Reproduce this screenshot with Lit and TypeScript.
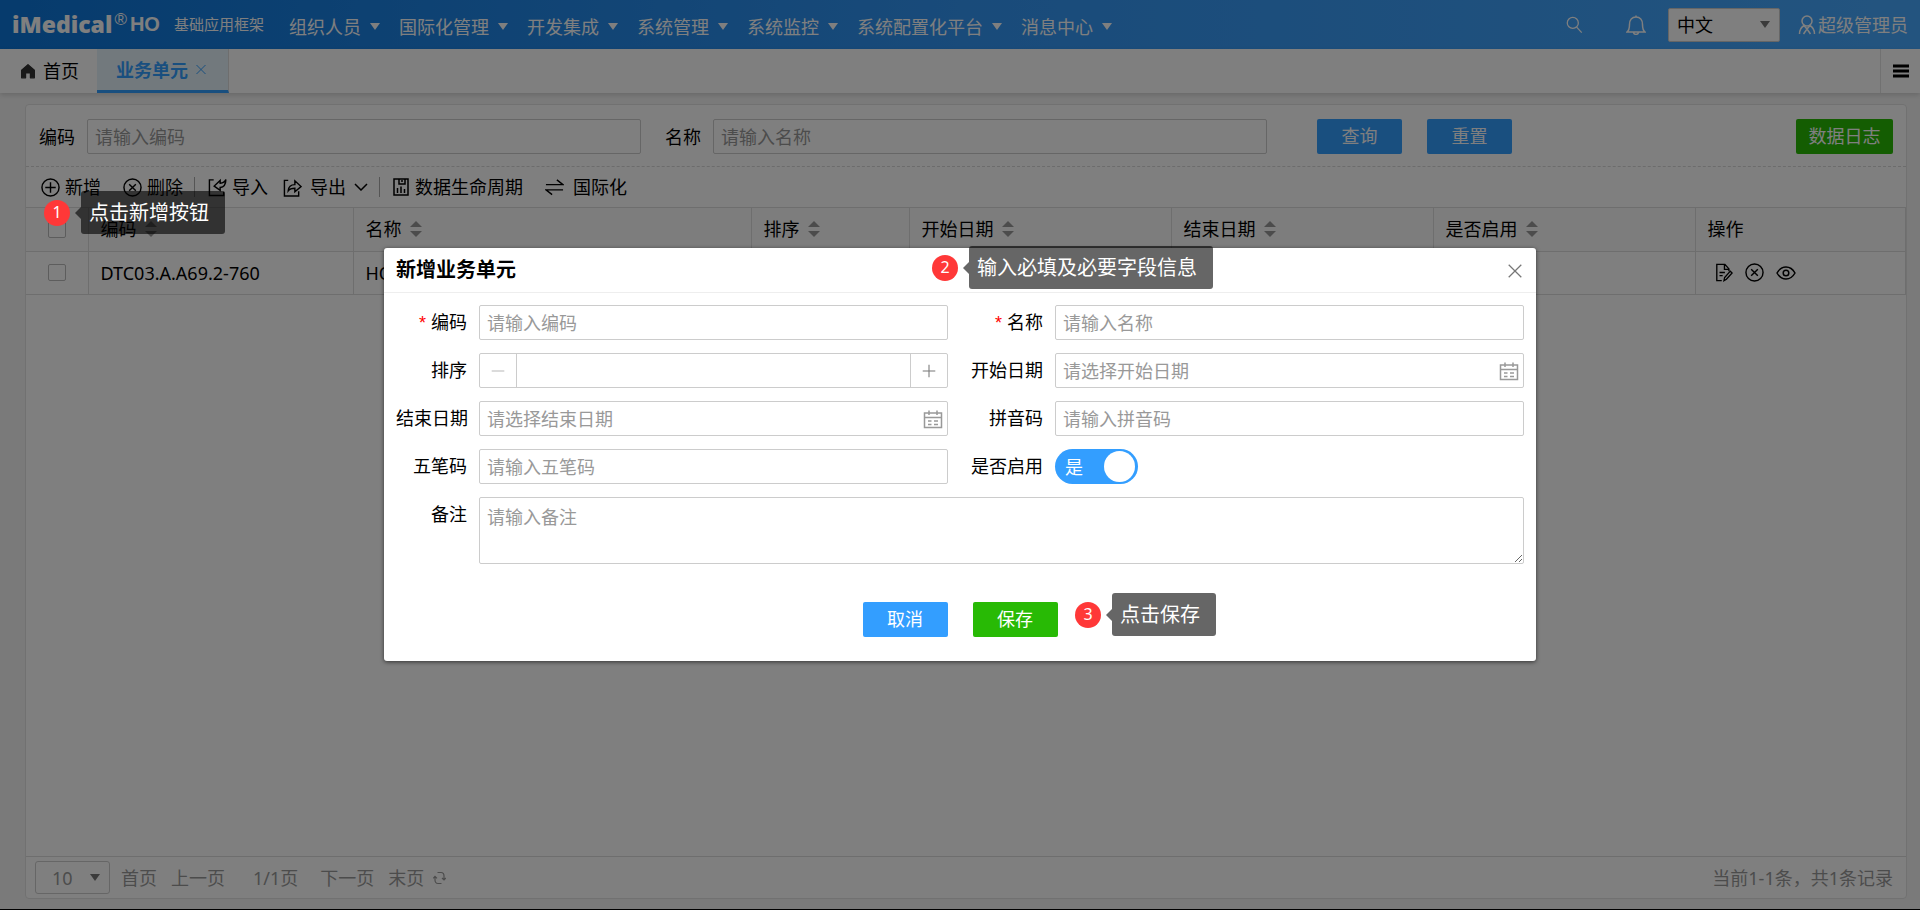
import { LitElement, html, css, svg, nothing } from "lit";
import { customElement, state } from "lit/decorators.js";

const icon = (w: number, h: number, body: unknown, box = "0 0 20 20") =>
  html`<svg class="icon" width=${w} height=${h} viewBox=${box} aria-hidden="true">${body}</svg>`;

const icons = {
  home: icon(16, 16, svg`<path d="M10 2 2 9v9.500h5v-6h6v6h5V9z" fill="#333" stroke="#333" stroke-linejoin="round" stroke-width="1.500"/>`),
  close: icon(10, 11, svg`<path d="M1 1 19 19M19 1 1 19" stroke-width="2"/>`),
  closeBig: icon(14, 14, svg`<path d="M1 1 19 19M19 1 1 19" stroke-width="1.800"/>`),
  add: icon(19, 19, svg`<circle cx="10" cy="10" r="9"/><path d="M10 4.500v11M4.500 10h11"/>`),
  remove: icon(19, 19, svg`<circle cx="10" cy="10" r="9"/><path d="m6.500 6.500 7 7M13.500 6.500l-7 7"/>`),
  importIcon: icon(19, 19, svg`<path d="M6 2H1.500v16.500h15V14.500"/><path d="M18.800 1.500c-1 2.500-3 3.700-6 4V2.500L6.500 8.500l6.300 4.500V10c4-.5 6-3.500 6-8.500z"/>`),
  exportIcon: icon(19, 19, svg`<path d="M5.500 2.500H1.500v16.500h15V14"/><path d="M5.500 13.500c.3-4.500 2.500-6.500 7-6.500V3l6.500 6-6.500 5.500v-3.700c-3 0-5.500.7-7 2.700z"/>`),
  down: icon(14, 8, svg`<path d="m1 1 6 6 6-6"/>`, "0 0 14 8"),
  cycle: icon(16, 18, svg`<path d="M1 1h14v16H1zM6 1v5h6V1M9 2v2M4.500 15v-5M8 15V8.500M11.500 15v-4"/>`, "0 0 16 18"),
  swap: icon(19, 19, svg`<path d="M1 7h18L12.500 2M19 12.500H1l6.500 5"/>`),
  search: icon(17, 18, svg`<circle cx="8" cy="7.500" r="6.500"/><path d="m12.500 12.500 6 6.500"/>`),
  bell: icon(20, 20, svg`<path d="M1 17h18c-2-1.500-2.500-3-2.500-7.500C16.500 5 14 2 10 2S3.500 5 3.500 9.500C3.500 14 3 15.500 1 17zM10 2V.5M7.500 17.500c.5 2.500 4.500 2.500 5 0"/>`),
  user: icon(18, 20, svg`<circle cx="9" cy="6" r="5"/><path d="M1.500 19c0-4.500 2-7 4.500-8.500l3 3.500 3-3.500c2.500 1.500 4.500 4 4.500 8.500M5.500 19 9 14l3.500 5"/>`, "0 0 18 20"),
  menu: icon(16, 14, svg`<path d="M0 2h16M0 7h16M0 12h16" stroke-width="3"/>`, "0 0 16 14"),
  edit: icon(18, 19, svg`<path d="M7.500 19H2V1h9l4.500 5v2.500M10.500 1v5.500h5M5 10h6M5 13.500h3.500"/><path d="m10 19 .7-3.500L17 8.500l2 2-6.300 7z"/>`),
  view: icon(20, 16, svg`<path d="M1 8c4.500-8 13.500-8 18 0-4.500 8-13.500 8-18 0z"/><circle cx="10" cy="8" r="2.800"/>`, "0 0 20 16"),
  calendar: icon(20, 20, svg`<path d="M1.500 4h17v14.500h-17zM1.500 8.500h17M6 1.500V6M14 1.500V6M5 12h3.500M11 12h4M5 15.500h3.500M11 15.500h4"/>`),
  minus: icon(14, 14, svg`<path d="M1 10h18"/>`),
  plus: icon(14, 14, svg`<path d="M1 10h18M10 1v18"/>`),
  refresh: icon(13, 14, svg`<path d="M4.500 1.500H8c2 0 3 1.500 3 3.500v3.500M9 7l2 2 1.800-2M8.500 12.500H5c-2 0-3-1.500-3-3.500V5.500M.2 7.300 2 5.300l2 2" stroke-width="1.200"/>`, "0 0 13 14"),
};

const MENUS = ["组织人员", "国际化管理", "开发集成", "系统管理", "系统监控", "系统配置化平台", "消息中心"];
const COLUMNS = ["编码", "名称", "排序", "开始日期", "结束日期", "是否启用"];

@customElement("app-root")
export class AppRoot extends LitElement {
  @state() private enabled = true;

  static styles = css`
    :host {
      display: block;
      height: 100vh;
      min-height: 700px;
      position: relative;
      overflow: hidden;
      box-sizing: border-box;
      border-bottom: 1px solid #000;
      font: 18px/24px "Noto Sans", "Noto Sans CJK SC", sans-serif;
      color: #000;
    }
    * { box-sizing: border-box; }
    button, input, select, textarea { font: inherit; color: inherit; margin: 0; }
    button { border: 0; background: none; padding: 0; cursor: pointer; white-space: nowrap; }
    a { color: inherit; text-decoration: none; white-space: nowrap; }
    .icon { fill: none; stroke: currentColor; stroke-width: 1.5; flex: none; display: block; }
    .page { height: 100%; display: flex; flex-direction: column; background: #f5f5f5; }

    .top {
      height: 49px; flex: none; display: flex; align-items: center; color: #fff;
      padding: 0 12px; background: linear-gradient(90deg, #0c76da, #3296f5 50%, #47a9ff);
    }
    .brand { display: flex; align-items: center; padding-bottom: 2px; }
    .brand-name { font: 800 23px/28px "Open Sans", sans-serif; }
    .brand-reg { font: 17px/20px "Liberation Sans", sans-serif; align-self: flex-start; margin-left: 2px; }
    .brand-ho { font: 700 20px/28px "Liberation Sans", sans-serif; margin-left: 3px; }
    .brand-sub { font-size: 15px; margin-left: 14px; }
    .nav { display: flex; gap: 19px; margin-left: 25px; padding-top: 4px; flex: 1; }
    .nav-item { display: flex; align-items: center; gap: 9px; }
    .caret { border: 5px solid transparent; border-top: 7px solid currentColor; border-bottom: 0; }
    .tools { display: flex; align-items: center; }
    .tool { margin-right: 43px; }
    .bell { margin-right: 22px; }
    .lang-box { display: grid; align-items: center; margin-right: 18px; color: #000; }
    .lang-box > *, .size-box > * { grid-area: 1 / 1; }
    .lang-box .caret, .size-box .caret { justify-self: end; margin-right: 10px; pointer-events: none; color: #777; }
    .lang { appearance: none; width: 112px; height: 34px; background: #fff; border: 1px solid #ccc; border-radius: 2px; padding: 0 8px; }
    .user { display: flex; align-items: center; gap: 2px; }

    .tabs { height: 44px; flex: none; display: flex; background: #fff; box-shadow: 0 2px 5px rgba(0, 0, 0, .15); }
    .tab { display: flex; align-items: center; gap: 7px; padding: 0 18px 0 20px; }
    .tab-on {
      padding: 0 22px 0 19px; gap: 8px; color: #339eff; font-weight: 700;
      background: #e4f3fa; border-bottom: 3px solid #339eff; border-right: 1px solid #ddd;
    }
    .tabs-more { margin-left: auto; width: 40px; display: grid; place-items: center; border-left: 1px solid #e2e2e2; }

    .panel {
      flex: 1; margin: 11px 13px 10px 25px; background: #fff; border: 1px solid #e2e2e2;
      border-radius: 4px; display: flex; flex-direction: column;
    }
    .query { display: flex; align-items: center; padding: 14px 13px 12px; border-bottom: 1px dashed #d8d8d8; }
    .field { flex: 0 1 554px; min-width: 120px; }
    .input {
      width: 100%; height: 35px; border: 1px solid #ccc; border-radius: 2px;
      background: #fff; padding: 0 7px; outline: 0; display: block;
    }
    .input::placeholder { color: #999; opacity: 1; }
    .query-label { margin-right: 12px; white-space: nowrap; }
    .query-label-next { margin-left: 24px; }
    .btn { height: 35px; width: 85px; border-radius: 2px; color: #fff; background: #339eff; padding-bottom: 2px; }
    .query-btn { margin-left: 25px; }
    .query-first { margin-left: 50px; }
    .green { background: #28ba05; }
    .log { width: 97px; margin-left: auto; }
    .bar { display: flex; align-items: center; height: 40px; padding: 0 15px; }
    .act { display: flex; align-items: center; gap: 5px; margin-right: 22px; }
    .act-tight { margin-right: 11px; }
    .act-in { margin-right: 15px; }
    .act-out { gap: 8px; margin-right: 11px; }
    .act-cycle { gap: 6px; }
    .act-swap { gap: 9px; }
    .sep { width: 1px; height: 20px; background: #aaa; margin-right: 13px; }

    .grid { flex: 1; border-top: 1px solid #ddd; }
    .table { width: 100%; border-collapse: collapse; table-layout: fixed; }
    .table th, .table td {
      font-weight: 400; text-align: left; height: 43px; padding: 0 12px; white-space: nowrap;
      border-right: 1px solid #ddd; border-bottom: 1px solid #ddd;
    }
    .table th { background: #fafafa; }
    .table .pick { padding: 0; }
    .c-pick { width: 62px; } .c-code { width: 265px; } .c-name { width: 398px; }
    .c-order { width: 158px; } .c-date { width: 262px; }
    .check { appearance: none; width: 18px; height: 17px; border: 1px solid #bbb; border-radius: 2px; background: #fff; display: block; margin: auto; }
    .head { display: flex; align-items: center; gap: 8px; }
    .sort { display: grid; gap: 4px; }
    .sort-up { border: 6px solid transparent; border-top: 0; border-bottom: 6px solid #999; }
    .sort-down { border: 6px solid transparent; border-bottom: 0; border-top: 6px solid #999; }
    .ops { display: flex; align-items: center; gap: 12px; padding-left: 7px; }

    .pager { display: flex; align-items: center; height: 42px; flex: none; padding: 0 13px 0 9px; border-top: 1px solid #ddd; color: #999; }
    .size-box { display: grid; align-items: center; margin-right: 11px; }
    .size { appearance: none; width: 75px; height: 33px; padding: 0 16px; border: 1px solid #ccc; border-radius: 3px; background: #fff; }
    .pg { margin-right: 14px; }
    .pg-wide { margin-right: 22px; }
    .pg-mid { margin: 0 22px 0 6px; }
    .pg-last { margin-right: 9px; }
    .total { margin-left: auto; }

    .mask { position: absolute; inset: 0; background: rgba(0, 0, 0, .5); }
    .dialog {
      position: absolute; top: 248px; left: 20%; right: 20%; background: #fff;
      border-radius: 3px; box-shadow: 0 1px 4px rgba(0, 0, 0, .6); padding-bottom: 24px;
    }
    .dialog-head { display: flex; align-items: center; justify-content: space-between; height: 45px; padding: 0 14px 0 12px; border-bottom: 1px solid #eee; }
    .dialog-title { font-size: 20px; line-height: 28px; font-weight: 700; margin: 0; }
    .dialog-close { color: #777; padding-top: 2px; }
    .form {
      display: grid; grid-template-columns: 71px 1fr 83px 1fr; column-gap: 12px; row-gap: 13px;
      padding: 12px 12px 0; align-items: center;
    }
    .label { text-align: right; white-space: nowrap; padding-bottom: 1px; }
    .req { color: #f00; margin-right: 5px; font-family: "Liberation Sans", sans-serif; }
    .spin { display: flex; border: 1px solid #ccc; border-radius: 2px; height: 35px; }
    .spin-btn { width: 36px; flex: none; display: grid; place-items: center; color: #777; }
    .spin-less { color: #bbb; }
    .spin-input { flex: 1; min-width: 0; border: 1px solid #ccc; border-width: 0 1px; outline: 0; background: #fff; padding: 0 8px; }
    .date { display: grid; align-items: center; color: #999; }
    .date > * { grid-area: 1 / 1; }
    .date .icon { justify-self: end; margin-right: 5px; }
    .switch { position: relative; display: flex; align-items: center; width: 83px; height: 35px; border-radius: 18px; background: #ccc; color: #fff; cursor: pointer; padding: 0 3px 0 10px; justify-content: space-between; }
    .switch-on { background: #339eff; }
    .switch-box { position: absolute; inset: 0; opacity: 0; width: 100%; height: 100%; cursor: pointer; }
    .knob { width: 31px; height: 31px; border-radius: 50%; background: #fff; }
    .label-top { align-self: start; padding-top: 5px; }
    .memo { grid-column: 2 / -1; height: 67px; padding: 7px; resize: vertical; }
    .foot { display: flex; justify-content: center; gap: 25px; margin-top: 38px; }

    .tip { position: absolute; display: flex; align-items: center; color: #fff; font-size: 20px; line-height: 27px; }
    .tip-one { left: 44px; top: 191px; }
    .tip-two { left: 932px; top: 246px; }
    .tip-three { left: 1075px; top: 593px; }
    .tip-num { width: 26px; height: 26px; border-radius: 50%; background: #ff3838; font-size: 16px; line-height: 24px; text-align: center; }
    .tip-arrow { border: 6px solid transparent; border-left: 0; border-right-color: rgba(0, 0, 0, .6); margin-left: 5px; }
    .tip-text { background: rgba(0, 0, 0, .6); border-radius: 3px; padding: 8px 16px 8px 8px; white-space: nowrap; }
  `;

  private text(id: string, label: string, required = false) {
    return html`
      <label class="label" for=${id}>${required ? html`<span class="req">*</span>` : nothing}${label}</label>
      <input class="input" id=${id} type="text" placeholder=${"请输入" + label} />`;
  }

  private date(id: string, label: string) {
    return html`
      <label class="label" for=${id}>${label}</label>
      <div class="date"><input class="input" id=${id} type="text" placeholder=${"请选择" + label} />${icons.calendar}</div>`;
  }

  private tip(place: string, num: number, text: string) {
    return html`<div class="tip ${place}"><span class="tip-num">${num}</span><span class="tip-arrow"></span><span class="tip-text">${text}</span></div>`;
  }

  render() {
    return html`
      <div class="page">
        <header class="top">
          <div class="brand">
            <span class="brand-name">iMedical</span><span class="brand-reg">®</span><span class="brand-ho">HO</span>
            <span class="brand-sub">基础应用框架</span>
          </div>
          <nav class="nav">${MENUS.map((m) => html`<a class="nav-item" href="#">${m}<span class="caret"></span></a>`)}</nav>
          <div class="tools">
            <button class="tool" aria-label="搜索">${icons.search}</button>
            <button class="bell" aria-label="消息">${icons.bell}</button>
            <div class="lang-box"><select class="lang" aria-label="语言"><option>中文</option></select><span class="caret"></span></div>
            <a class="user" href="#">${icons.user}超级管理员</a>
          </div>
        </header>
        <nav class="tabs">
          <a class="tab" href="#">${icons.home}首页</a>
          <a class="tab tab-on" href="#">业务单元${icons.close}</a>
          <button class="tabs-more" aria-label="更多">${icons.menu}</button>
        </nav>
        <main class="panel">
          <form class="query">
            <label class="query-label" for="q-code">编码</label>
            <div class="field"><input class="input" id="q-code" placeholder="请输入编码" /></div>
            <label class="query-label query-label-next" for="q-name">名称</label>
            <div class="field"><input class="input" id="q-name" placeholder="请输入名称" /></div>
            <button class="btn query-btn query-first" type="button">查询</button>
            <button class="btn query-btn" type="button">重置</button>
            <button class="btn green log" type="button">数据日志</button>
          </form>
          <div class="bar">
            <button class="act">${icons.add}新增</button>
            <button class="act act-tight">${icons.remove}删除</button>
            <span class="sep"></span>
            <button class="act act-in">${icons.importIcon}导入</button>
            <button class="act act-out">${icons.exportIcon}导出${icons.down}</button>
            <span class="sep"></span>
            <button class="act act-cycle">${icons.cycle}数据生命周期</button>
            <button class="act act-swap">${icons.swap}国际化</button>
          </div>
          <div class="grid">
            <table class="table">
              <colgroup>
                <col class="c-pick" /><col class="c-code" /><col class="c-name" /><col class="c-order" />
                <col class="c-date" /><col class="c-date" /><col class="c-date" /><col />
              </colgroup>
              <thead>
                <tr>
                  <th class="pick"><input class="check" type="checkbox" aria-label="全选" /></th>
                  ${COLUMNS.map((c) => html`<th><div class="head">${c}<span class="sort"><span class="sort-up"></span><span class="sort-down"></span></span></div></th>`)}
                  <th>操作</th>
                </tr>
              </thead>
              <tbody>
                <tr>
                  <td class="pick"><input class="check" type="checkbox" aria-label="选择" /></td>
                  <td>DTC03.A.A69.2-760</td>
                  <td>HO</td><td></td><td></td><td></td><td></td>
                  <td><div class="ops">
                    <button aria-label="编辑">${icons.edit}</button>
                    <button aria-label="删除">${icons.remove}</button>
                    <button aria-label="查看">${icons.view}</button>
                  </div></td>
                </tr>
              </tbody>
            </table>
          </div>
          <footer class="pager">
            <div class="size-box"><select class="size" aria-label="每页条数"><option>10</option></select><span class="caret"></span></div>
            <a class="pg" href="#">首页</a><a class="pg-wide" href="#">上一页</a>
            <span class="pg-mid">1/1页</span>
            <a class="pg" href="#">下一页</a><a class="pg-last" href="#">末页</a>
            <button aria-label="刷新">${icons.refresh}</button>
            <span class="total">当前1-1条，共1条记录</span>
          </footer>
        </main>
      </div>
      <div class="mask"></div>
      <section class="dialog" role="dialog" aria-labelledby="dialog-title">
        <div class="dialog-head">
          <h2 class="dialog-title" id="dialog-title">新增业务单元</h2>
          <button class="dialog-close" aria-label="关闭">${icons.closeBig}</button>
        </div>
        <form class="form">
          ${this.text("code", "编码", true)} ${this.text("name", "名称", true)}
          <label class="label" for="order">排序</label>
          <div class="spin">
            <button class="spin-btn spin-less" type="button" aria-label="减少">${icons.minus}</button>
            <input class="spin-input" id="order" inputmode="numeric" />
            <button class="spin-btn" type="button" aria-label="增加">${icons.plus}</button>
          </div>
          ${this.date("start", "开始日期")} ${this.date("end", "结束日期")}
          ${this.text("pinyin", "拼音码")} ${this.text("wubi", "五笔码")}
          <label class="label" for="enabled">是否启用</label>
          <div class="switch ${this.enabled ? "switch-on" : ""}">
            <span>${this.enabled ? "是" : "否"}</span><span class="knob"></span>
            <input class="switch-box" id="enabled" type="checkbox" .checked=${this.enabled}
              @change=${() => (this.enabled = !this.enabled)} />
          </div>
          <label class="label label-top" for="memo">备注</label>
          <textarea class="input memo" id="memo" placeholder="请输入备注"></textarea>
        </form>
        <div class="foot"><button class="btn">取消</button><button class="btn green">保存</button></div>
      </section>
      ${this.tip("tip-one", 1, "点击新增按钮")}
      ${this.tip("tip-two", 2, "输入必填及必要字段信息")}
      ${this.tip("tip-three", 3, "点击保存")}
    `;
  }
}
